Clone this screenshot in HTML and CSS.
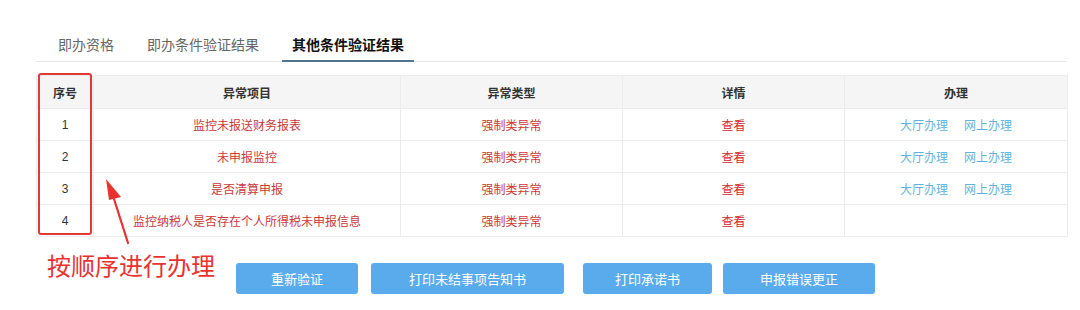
FILE: index.html
```html
<!DOCTYPE html>
<html lang="zh-CN">
<head>
<meta charset="utf-8">
<link rel="stylesheet" href="styles.css">
</head>
<body>
<div class="page">
  <div class="tabs">
    <div class="tab">即办资格</div>
    <div class="tab">即办条件验证结果</div>
    <div class="tab active">其他条件验证结果</div>
  </div>

  <div class="table-wrap">
    <table class="grid">
      <colgroup>
        <col class="c-no"><col class="c-item"><col class="c-type"><col class="c-detail"><col class="c-op">
      </colgroup>
      <thead>
        <tr><th>序号</th><th>异常项目</th><th>异常类型</th><th>详情</th><th>办理</th></tr>
      </thead>
      <tbody>
        <tr><td class="no">1</td><td class="red">监控未报送财务报表</td><td class="red">强制类异常</td><td class="view">查看</td><td><span class="link">大厅办理</span><span class="link">网上办理</span></td></tr>
        <tr><td class="no">2</td><td class="red">未申报监控</td><td class="red">强制类异常</td><td class="view">查看</td><td><span class="link">大厅办理</span><span class="link">网上办理</span></td></tr>
        <tr><td class="no">3</td><td class="red">是否清算申报</td><td class="red">强制类异常</td><td class="view">查看</td><td><span class="link">大厅办理</span><span class="link">网上办理</span></td></tr>
        <tr><td class="no">4</td><td class="red">监控纳税人是否存在个人所得税未申报信息</td><td class="red">强制类异常</td><td class="view">查看</td><td></td></tr>
      </tbody>
    </table>
    <div class="mark-box"></div>
    <svg class="mark-arrow" width="40" height="70" viewBox="0 0 40 70">
      <path d="M28 66 L14 22" stroke="#e8322f" stroke-width="2.2" fill="none" stroke-linecap="round"/>
      <path d="M6 2 L21 20 L9 23 Z" fill="#e8322f"/>
    </svg>
  </div>

  <div class="actions">
    <div class="note">按顺序进行办理</div>
    <button class="btn b1">重新验证</button>
    <button class="btn b2">打印未结事项告知书</button>
    <button class="btn b3">打印承诺书</button>
    <button class="btn b4">申报错误更正</button>
  </div>
</div>
</body>
</html>
```

FILE: styles.css
```css
* { box-sizing: border-box; }
html, body { margin: 0; padding: 0; background: #ffffff; }
body {
  font-family: "Noto Sans CJK SC", "Liberation Sans", sans-serif;
  width: 1080px;
  height: 310px;
  overflow: hidden;
}
.page { padding-top: 34px; }

.tabs {
  display: flex;
  margin-left: 36px;
  width: 1031px;
  padding-left: 12px;
  border-bottom: 1px solid #e6e6e6;
  gap: 13px;
}
.tab {
  padding: 0 10px 6px;
  font-size: 14px;
  line-height: 20px;
  color: #666;
  margin-bottom: -1px;
  border-bottom: 2px solid transparent;
}
.tab.active {
  color: #111;
  font-weight: bold;
  border-bottom-color: #52738c;
}

.table-wrap {
  position: relative;
  margin: 13px 0 0 36px;
  width: 1031px;
}
.grid {
  width: 1031px;
  border-collapse: collapse;
  table-layout: fixed;
  font-size: 12px;
  border: 1px solid #ececec;
}
.c-no { width: 57px; }
.c-item { width: 307px; }
.c-type { width: 222px; }
.c-detail { width: 222px; }
.c-op { width: 223px; }
.grid th {
  background: #f5f5f5;
  height: 33px;
  color: #333;
  font-weight: bold;
  border: 1px solid #ececec;
  text-align: center;
}
.grid td {
  height: 32px;
  text-align: center;
  border: 1px solid #ececec;
  color: #333;
}
.grid td.no { font-family: "Liberation Sans", sans-serif; font-size: 12px; }
.grid td.red { color: #c93a3a; }
.grid td.view { color: #d42a2a; }
.link { color: #5fb3d9; margin: 0 8px; }

.mark-box {
  position: absolute;
  left: 2px;
  top: -2px;
  width: 54px;
  height: 162px;
  border: 2px solid #e0393a;
  border-radius: 3px;
}
.mark-arrow {
  position: absolute;
  left: 64px;
  top: 102px;
}

.actions {
  display: flex;
  align-items: flex-start;
  padding: 13px 0 0 47px;
}
.note {
  font-size: 24px;
  line-height: 30px;
  color: #e8322f;
  margin-right: 21px;
}
.btn {
  margin-top: 13px;
  height: 31px;
  border: none;
  border-radius: 3px;
  background: #5aabec;
  color: #fff;
  font-family: "Noto Sans CJK SC", sans-serif;
  font-size: 13px;
  padding: 0;
}
.b1 { width: 122px; margin-right: 13px; }
.b2 { width: 193px; margin-right: 19px; }
.b3 { width: 129px; margin-right: 11px; }
.b4 { width: 152px; }
```
